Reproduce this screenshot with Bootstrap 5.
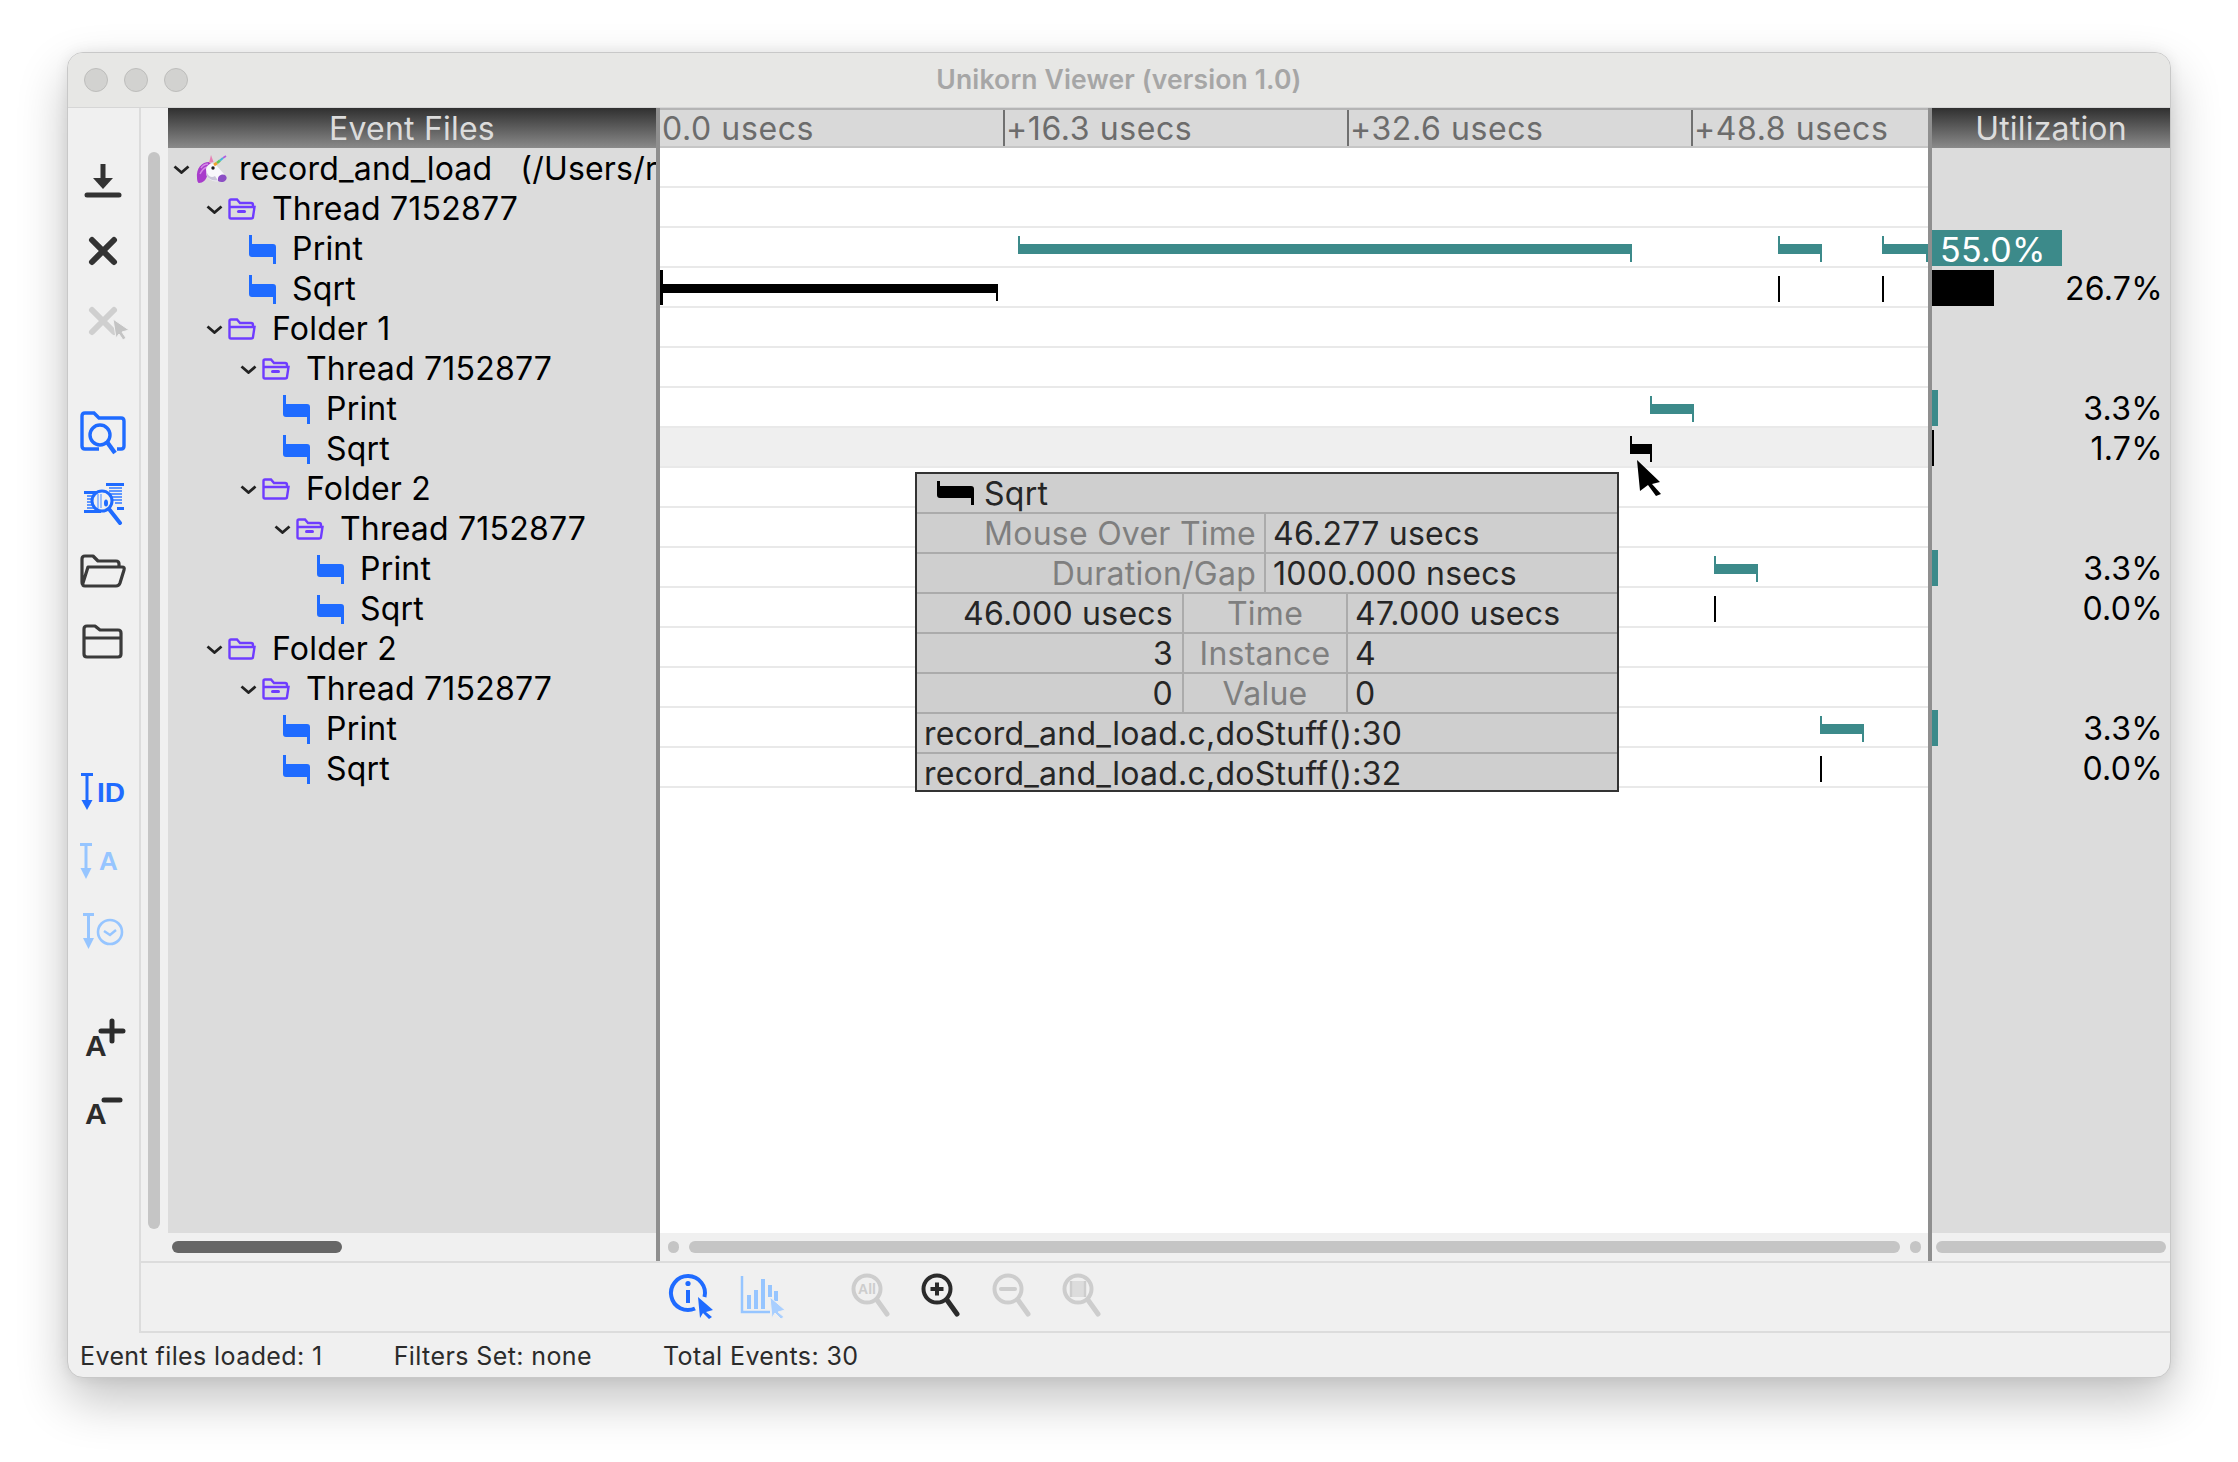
<!DOCTYPE html>
<html lang="en">
<head>
    <meta charset="UTF-8">
    <meta name="viewport" content="width=device-width, initial-scale=1.0">
    <title>Unikorn Viewer (version 1.0)</title>
    <link href="https://cdn.jsdelivr.net/npm/bootstrap@5.3.3/dist/css/bootstrap.min.css" rel="stylesheet">
    <style>
        :root {
            --app-bg: #f0f0f0;
            --panel-grey: #dcdcdc;
            --line: #dcdcdc;
            --lane-line: #e9e9e9;
            --teal: #3c8a8a;
        }
        html, body { height: 100%; }
        body {
            background: #fff;
            font-family: Inter, "Noto Sans", sans-serif;
            padding: 52px 0 0 67px;
        }
        svg { display: block; overflow: visible; }
        .app-window {
            width: 2104px;
            height: 1326px;
            background: var(--app-bg);
            border: 1px solid #c8c8c8;
            border-radius: 16px;
            box-shadow: 0 22px 50px rgba(0, 0, 0, .24), 0 0 14px rgba(0, 0, 0, .08);
            overflow: hidden;
        }
        .title-bar {
            height: 55px;
            background: #e7e7e5;
            border-bottom: 1px solid #d6d6d6;
            padding-left: 16px;
            gap: 16px;
        }
        .light-dot {
            width: 24px;
            height: 24px;
            border-radius: 50%;
            background: #d2d2d0;
            border: 1px solid #bdbdbb;
        }
        .title-text {
            left: 0;
            right: 0;
            text-align: center;
            font-size: 26.5px;
            font-weight: 600;
            color: #a6a6a6;
            letter-spacing: .15px;
        }
        .side-tools {
            width: 73px;
            border-right: 2px solid var(--line);
            padding: 38px 2px 0 0;
        }
        .tool-btn { height: 70px; }
        .tool-gap-a { margin-top: 41px; }
        .tool-gap-b { margin-top: 77px; }
        .tool-gap-c { margin-top: 39px; }
        .tool-gap-d { height: 74px; }

        .scroll-strip { width: 27px; padding: 44px 8px 32px 7px; }
        .scroll-strip > div { width: 12px; height: 100%; background: #c5c5c5; border-radius: 6px; }
        .files-col { width: 488px; }
        .time-col { width: 1272px; border-left: 4px solid #8f8f8f; }
        .util-col { width: 242px; border-left: 4px solid #8f8f8f; }
        .dark-head {
            height: 40px;
            line-height: 42px;
            text-align: center;
            font-size: 32px;
            color: #dcdcdc;
            background: linear-gradient(#303030, #8a8a8a);
            letter-spacing: .2px;
        }
        .ruler {
            height: 40px;
            line-height: 38px;
            background: #d9d9d9;
            border-top: 2px solid #b5b5b5;
            border-bottom: 2px solid #c6c6c6;
            font-size: 32px;
            color: #6c6c6c;
            letter-spacing: .6px;
        }
        .ruler-cell { flex: none; width: 344px; height: 38px; border-left: 2px solid #707070; padding-left: 1px; white-space: nowrap; }
        .ruler-cell:first-child { width: 343px; border-left: 0; padding-left: 2px; }
        .pane-body { flex: 1 1 0; min-height: 0; }
        .files-body { background: var(--panel-grey); overflow: hidden; }
        .tree-row {
            height: 40px;
            padding-top: 2px;
            font-size: 32px;
            color: #000;
            white-space: nowrap;
            letter-spacing: .2px;
        }
        .lvl-0 { padding-left: 5px; }
        .lvl-1 { padding-left: 38px; }
        .lvl-2 { padding-left: 72px; }
        .lvl-3 { padding-left: 106px; }
        .leaf-1 { padding-left: 81px; }
        .leaf-2 { padding-left: 115px; }
        .leaf-3 { padding-left: 149px; }
        .chev-slot { width: 22px; flex: none; }
        .icon-slot { width: 44px; flex: none; }
        .leaf-slot { width: 43px; flex: none; }
        .path-note { margin-left: 28px; }
        .lane {
            height: 40px;
            border-bottom: 2px solid var(--lane-line);
            background: #fff;
        }
        .lane-hot { background: #efefef; }
        .ev-bar { position: absolute; top: 16px; height: 10px; }
        .ev-bar::before, .ev-bar::after { content: ""; position: absolute; width: 2px; height: 18px; background: inherit; }
        .ev-bar::before { left: 0; top: -8px; }
        .ev-bar::after { right: 0; top: 0; }
        .ev-teal { background: var(--teal); }
        .ev-black { background: #000; }
        .ev-tick { position: absolute; top: 8px; width: 2px; height: 26px; background: #000; }
        .hsb-strip { height: 28px; background: var(--app-bg); padding-top: 8px; }
        .hsb-thumb { height: 12px; border-radius: 6px; background: #c5c5c5; }
        .hsb-dark { background: #666; width: 170px; margin-left: 4px; }
        .hsb-dot { width: 11px; }
        .hsb-gap { gap: 10px; }
        .util-row { height: 40px; font-size: 32px; color: #000; text-align: right; padding-right: 7px; line-height: 42px; letter-spacing: .3px; }
        .util-fill { position: absolute; left: 0; top: 2px; height: 36px; }
        .util-row span { position: relative; }
        .util-on-bar { text-align: left; padding-left: 8px; color: #fff; font-size: 34px; line-height: 43px; }
        .tip-box {
            position: absolute;
            left: 255px;
            top: 324px;
            width: 704px;
            height: 320px;
            background: #cfcfcf;
            border: 2px solid #333;
            font-size: 32px;
            line-height: 39px;
            color: #262626;
            letter-spacing: .25px;
            white-space: nowrap;
        }
        .tip-line { height: 40px; border-bottom: 2px solid #ababab; }
        .tip-line:last-child { border-bottom: 0; height: 36px; }
        .tip-key { color: #7f7f7f; }
        .tip-cell { border-right: 2px solid #ababab; }
        .tip-w1 { width: 349px; padding-right: 8px; text-align: right; }
        .tip-w2 { width: 267px; padding-right: 9px; text-align: right; }
        .tip-w3 { width: 164px; text-align: center; }
        .tip-val { padding-left: 7px; }
        .tip-src { padding-left: 7px; }
        .tip-head { padding-left: 20px; gap: 10px; }
        .cursor-mark { position: absolute; left: 977px; top: 312px; }
        .bottom-tools {
            height: 72px;
            border-top: 2px solid var(--line);
            border-bottom: 2px solid var(--line);
            padding: 10px 0 0 526px;
        }
        .bottom-gap { width: 57px; flex: none; }
        .zoom-set { gap: 22.3px; }
        .status-bar { height: 44px; padding: 3px 0 0 12px; gap: 71px; font-size: 25px; color: #2b2b2b; letter-spacing: .4px; }
    </style>
</head>
<body>

<!-- shared icons -->
<svg width="0" height="0" class="position-absolute">
    <symbol id="chev" viewBox="0 0 17 9"><path d="M1.5 1.5 8.5 7.5 15.5 1.5" fill="none" stroke="#222" stroke-width="2.8"/></symbol>
    <symbol id="flag" viewBox="0 0 27 29"><path d="M0 0h3v9h21q3 0 3 3v17h-3v-7H3q-3 0-3-3z"/></symbol>
    <symbol id="folder" viewBox="0 0 28 22">
        <path d="M3 20.5Q1.5 20.5 1.5 19V3Q1.5 1.5 3 1.5H9L12 5H23Q25 5 25 7V8M1.5 9H26.5L25 19Q25 20.5 23 20.5H3" fill="none" stroke="#6f3cff" stroke-width="2.4"/>
    </symbol>
    <symbol id="folderThread" viewBox="0 0 28 22">
        <path d="M3 20.5Q1.5 20.5 1.5 19V3Q1.5 1.5 3 1.5H9L12 5H23Q25 5 25 7V8M1.5 9H26.5L25 19Q25 20.5 23 20.5H3" fill="none" stroke="#6f3cff" stroke-width="2.4"/>
        <rect x="9" y="12" width="9" height="3" rx="1.5" fill="#6f3cff"/>
    </symbol>
    <symbol id="glass" viewBox="0 0 48 48">
        <circle cx="23" cy="16" r="13.5" fill="none" stroke="currentColor" stroke-width="4"/>
        <path d="M33 27 43 41" stroke="currentColor" stroke-width="5" stroke-linecap="round"/>
    </symbol>
</svg>

<div class="app-window d-flex flex-column">
    <div class="title-bar d-flex align-items-center position-relative">
        <div class="light-dot"></div>
        <div class="light-dot"></div>
        <div class="light-dot"></div>
        <div class="title-text position-absolute">Unikorn Viewer (version 1.0)</div>
    </div>

    <div class="d-flex flex-grow-1" style="min-height:0">
        <!-- left tools -->
        <div class="side-tools flex-shrink-0">
            <div class="tool-btn d-flex justify-content-center align-items-center">
                <svg width="48" height="48" viewBox="0 0 48 48"><path d="M24 7V23" stroke="#333" stroke-width="5"/><path d="M14 21H34L24 32Z" fill="#333"/><path d="M8 38H40" stroke="#333" stroke-width="5" stroke-linecap="round"/></svg>
            </div>
            <div class="tool-btn d-flex justify-content-center align-items-center">
                <svg width="48" height="48" viewBox="0 0 48 48"><path d="M13 13 35 35M35 13 13 35" stroke="#333" stroke-width="6" stroke-linecap="round"/></svg>
            </div>
            <div class="tool-btn d-flex justify-content-center align-items-center">
                <svg width="48" height="48" viewBox="0 0 48 48"><path d="M13 13 35 35M35 13 13 35" stroke="#cfcfcf" stroke-width="6" stroke-linecap="round"/><path d="M34 22 50 33 43 35 47 41 44 43 40 37 37 41Z" fill="#c4c4c4" stroke="#f0f0f0"/></svg>
            </div>
            <div class="tool-btn tool-gap-a d-flex justify-content-center align-items-center">
                <svg width="48" height="48" viewBox="0 0 48 48"><path d="M20 41H6Q3 41 3 38V8Q3 5 6 5H15L20 10H42Q45 10 45 13V38Q45 41 42 41H38" fill="none" stroke="#1f6bff" stroke-width="3.4"/><circle cx="21" cy="27" r="10" fill="none" stroke="#1f6bff" stroke-width="3.4"/><path d="M28 34 36 45" stroke="#1f6bff" stroke-width="4.4"/></svg>
            </div>
            <div class="tool-btn d-flex justify-content-center align-items-center">
                <svg width="48" height="48" viewBox="0 0 48 48" fill="#1f6bff">
                    <path d="M8 18H18M8 21H18M8 24H18M8 27H18M8 30H18M30 10H43M30 13H43M30 16H43M32 19H43M34 22H43M36 25H43" stroke="#5f97ff" stroke-width="1.800"/>
                    <path d="M5 13H19V16H5ZM5 32H22V35H5ZM27 5H45V8H27ZM38 29H45V32H38Z"/>
                    <circle cx="23" cy="23" r="10" fill="#f0f0f0" stroke="#1f6bff" stroke-width="3"/>
                    <path d="M19 16V30M22 16V30" stroke="#8db6ff" stroke-width="1.800"/>
                    <ellipse cx="27" cy="25" rx="2" ry="3.500"/>
                    <path d="M30 31 41 45" stroke="#1f6bff" stroke-width="4" stroke-linecap="round"/>
                </svg>
            </div>
            <div class="tool-btn d-flex justify-content-center align-items-center">
                <svg width="48" height="48" viewBox="0 0 48 48"><path d="M5 37Q3 37 3 34V11Q3 8 6 8H14L19 13H37Q40 13 40 16V19M9 19H43Q46 19 45 22L41 35Q40 38 37 38H6Q3 38 4 35Z" fill="none" stroke="#3a3a3a" stroke-width="3.2" stroke-linejoin="round"/></svg>
            </div>
            <div class="tool-btn d-flex justify-content-center align-items-center">
                <svg width="48" height="48" viewBox="0 0 48 48"><path d="M8 8H16L21 12H39Q42 12 42 15V36Q42 39 39 39H8Q5 39 5 36V11Q5 8 8 8ZM5 20H42" fill="none" stroke="#3a3a3a" stroke-width="3.2" stroke-linejoin="round"/></svg>
            </div>
            <div class="tool-btn tool-gap-b d-flex justify-content-center align-items-center">
                <svg width="48" height="48" viewBox="0 0 48 48"><path d="M2 9.500H14M8 9V36" stroke="#1f6bff" stroke-width="3"/><path d="M2.500 35H13.500L8 45Z" fill="#1f6bff"/><text x="18" y="37" font-family="Liberation Sans, sans-serif" font-weight="700" font-size="28" fill="#1f6bff">ID</text></svg>
            </div>
            <div class="tool-btn d-flex justify-content-center align-items-center">
                <svg width="48" height="48" viewBox="0 0 48 48"><path d="M1 9.500H13M7 9V34" stroke="#96c5ff" stroke-width="3"/><path d="M1.500 33H12.500L7 44Z" fill="#96c5ff"/><text x="20" y="35" font-family="Liberation Sans, sans-serif" font-weight="700" font-size="26" fill="#96c5ff">A</text></svg>
            </div>
            <div class="tool-btn d-flex justify-content-center align-items-center">
                <svg width="48" height="48" viewBox="0 0 48 48"><path d="M4 9.500H15M9.500 9V34" stroke="#96c5ff" stroke-width="3"/><path d="M4 33H15L9.500 44Z" fill="#96c5ff"/><circle cx="31" cy="27" r="12" fill="none" stroke="#96c5ff" stroke-width="2.6"/><path d="M25 26 31 30 37 25" fill="none" stroke="#96c5ff" stroke-width="2.4"/></svg>
            </div>
            <div class="tool-btn tool-gap-c d-flex justify-content-center align-items-center">
                <svg width="48" height="48" viewBox="0 0 48 48"><text x="6" y="42" font-family="Liberation Sans, sans-serif" font-weight="700" font-size="30" fill="#2c2c2c">A</text><path d="M33 7V27M22 17H44" stroke="#2c2c2c" stroke-width="5" stroke-linecap="round"/></svg>
            </div>
            <div class="tool-btn tool-gap-d d-flex justify-content-center align-items-center">
                <svg width="48" height="48" viewBox="0 0 48 48"><text x="6" y="38" font-family="Liberation Sans, sans-serif" font-weight="700" font-size="30" fill="#2c2c2c">A</text><path d="M25 14H41" stroke="#2c2c2c" stroke-width="5" stroke-linecap="round"/></svg>
            </div>
        </div>

        <div class="flex-grow-1 d-flex flex-column" style="min-width:0">
            <div class="d-flex flex-grow-1" style="min-height:0">
                <div class="scroll-strip flex-shrink-0"><div></div></div>

                <!-- event files -->
                <div class="files-col d-flex flex-column flex-shrink-0">
                    <div class="dark-head">Event Files</div>
                    <div class="pane-body files-body">
                        <div class="tree-row lvl-0 d-flex align-items-center">
                            <span class="chev-slot"><svg width="17" height="9"><use href="#chev"/></svg></span>
                            <span class="icon-slot">
                                <svg width="32" height="30" viewBox="0 0 32 30">
                                    <path d="M14 8C7 8 1 14 2 24 2 27 3 29 4 29 8 29 11 26 12 22L18 12Z" fill="#a83ccb"/>
                                    <path d="M6 14C8 11 11 10 13 10M5 20C7 16 9 14 12 13" stroke="#d58ae6" stroke-width="1.400" fill="none"/>
                                    <path d="M11 15C12 10 18 8 21 11L29 20 24 27C19 28 13 26 11.500 21Z" fill="#f8f8fc"/>
                                    <path d="M11.500 21C13 25 18 27 23 26.500L20 22C17 24 14 23 12 19Z" fill="#c9c6d8"/>
                                    <path d="M23 24C24 20 30 19 31.500 23 32.500 27 27 29.500 23 27Z" fill="#8c4fc4"/>
                                    <path d="M14 9 16 1 18.500 8Z" fill="#e77fb4"/>
                                    <path d="M19 11 22 9" stroke="#f2a22e" stroke-width="3"/>
                                    <path d="M22 9 25 6.500" stroke="#62c65a" stroke-width="2.600"/>
                                    <path d="M25 6.500 28 4" stroke="#45b8d8" stroke-width="2.200"/>
                                    <path d="M28 4 31 2" stroke="#b05fe0" stroke-width="1.800"/>
                                    <circle cx="18" cy="14" r="1.700" fill="#1c1c1c"/>
                                </svg>
                            </span>
                            <span>record_and_load</span><span class="path-note">(/Users/r</span>
                        </div>
                        <div class="tree-row lvl-1 d-flex align-items-center">
                            <span class="chev-slot"><svg width="17" height="9"><use href="#chev"/></svg></span>
                            <span class="icon-slot"><svg width="28" height="22"><use href="#folderThread"/></svg></span>
                            <span>Thread 7152877</span>
                        </div>
                        <div class="tree-row leaf-1 d-flex align-items-center">
                            <span class="leaf-slot"><svg width="27" height="29" fill="#1f6bff"><use href="#flag"/></svg></span><span>Print</span>
                        </div>
                        <div class="tree-row leaf-1 d-flex align-items-center">
                            <span class="leaf-slot"><svg width="27" height="29" fill="#1f6bff"><use href="#flag"/></svg></span><span>Sqrt</span>
                        </div>
                        <div class="tree-row lvl-1 d-flex align-items-center">
                            <span class="chev-slot"><svg width="17" height="9"><use href="#chev"/></svg></span>
                            <span class="icon-slot"><svg width="28" height="22"><use href="#folder"/></svg></span>
                            <span>Folder 1</span>
                        </div>
                        <div class="tree-row lvl-2 d-flex align-items-center">
                            <span class="chev-slot"><svg width="17" height="9"><use href="#chev"/></svg></span>
                            <span class="icon-slot"><svg width="28" height="22"><use href="#folderThread"/></svg></span>
                            <span>Thread 7152877</span>
                        </div>
                        <div class="tree-row leaf-2 d-flex align-items-center">
                            <span class="leaf-slot"><svg width="27" height="29" fill="#1f6bff"><use href="#flag"/></svg></span><span>Print</span>
                        </div>
                        <div class="tree-row leaf-2 d-flex align-items-center">
                            <span class="leaf-slot"><svg width="27" height="29" fill="#1f6bff"><use href="#flag"/></svg></span><span>Sqrt</span>
                        </div>
                        <div class="tree-row lvl-2 d-flex align-items-center">
                            <span class="chev-slot"><svg width="17" height="9"><use href="#chev"/></svg></span>
                            <span class="icon-slot"><svg width="28" height="22"><use href="#folder"/></svg></span>
                            <span>Folder 2</span>
                        </div>
                        <div class="tree-row lvl-3 d-flex align-items-center">
                            <span class="chev-slot"><svg width="17" height="9"><use href="#chev"/></svg></span>
                            <span class="icon-slot"><svg width="28" height="22"><use href="#folderThread"/></svg></span>
                            <span>Thread 7152877</span>
                        </div>
                        <div class="tree-row leaf-3 d-flex align-items-center">
                            <span class="leaf-slot"><svg width="27" height="29" fill="#1f6bff"><use href="#flag"/></svg></span><span>Print</span>
                        </div>
                        <div class="tree-row leaf-3 d-flex align-items-center">
                            <span class="leaf-slot"><svg width="27" height="29" fill="#1f6bff"><use href="#flag"/></svg></span><span>Sqrt</span>
                        </div>
                        <div class="tree-row lvl-1 d-flex align-items-center">
                            <span class="chev-slot"><svg width="17" height="9"><use href="#chev"/></svg></span>
                            <span class="icon-slot"><svg width="28" height="22"><use href="#folder"/></svg></span>
                            <span>Folder 2</span>
                        </div>
                        <div class="tree-row lvl-2 d-flex align-items-center">
                            <span class="chev-slot"><svg width="17" height="9"><use href="#chev"/></svg></span>
                            <span class="icon-slot"><svg width="28" height="22"><use href="#folderThread"/></svg></span>
                            <span>Thread 7152877</span>
                        </div>
                        <div class="tree-row leaf-2 d-flex align-items-center">
                            <span class="leaf-slot"><svg width="27" height="29" fill="#1f6bff"><use href="#flag"/></svg></span><span>Print</span>
                        </div>
                        <div class="tree-row leaf-2 d-flex align-items-center">
                            <span class="leaf-slot"><svg width="27" height="29" fill="#1f6bff"><use href="#flag"/></svg></span><span>Sqrt</span>
                        </div>
                    </div>
                    <div class="hsb-strip"><div class="hsb-thumb hsb-dark"></div></div>
                </div>

                <!-- timeline -->
                <div class="time-col d-flex flex-column flex-shrink-0">
                    <div class="ruler d-flex overflow-hidden">
                        <div class="ruler-cell">0.0 usecs</div>
                        <div class="ruler-cell">+16.3 usecs</div>
                        <div class="ruler-cell">+32.6 usecs</div>
                        <div class="ruler-cell">+48.8 usecs</div>
                    </div>
                    <div class="pane-body bg-white position-relative">
                        <div class="lane"></div>
                        <div class="lane"></div>
                        <div class="lane position-relative">
                            <div class="ev-bar ev-teal" style="left:358px;width:614px"></div>
                            <div class="ev-bar ev-teal" style="left:1118px;width:44px"></div>
                            <div class="ev-bar ev-teal" style="left:1222px;width:46px"></div>
                        </div>
                        <div class="lane position-relative">
                            <div class="ev-tick" style="left:0;top:2px;height:35px;width:3px"></div>
                            <div class="ev-tick" style="left:1px;top:16px;height:9px;width:336px"></div>
                            <div class="ev-tick" style="left:336px;top:16px;height:17px;width:2px"></div>
                            <div class="ev-tick" style="left:1118px"></div>
                            <div class="ev-tick" style="left:1222px"></div>
                        </div>
                        <div class="lane"></div>
                        <div class="lane"></div>
                        <div class="lane position-relative">
                            <div class="ev-bar ev-teal" style="left:990px;width:44px"></div>
                        </div>
                        <div class="lane lane-hot position-relative">
                            <div class="ev-bar ev-black" style="left:970px;width:22px"></div>
                        </div>
                        <div class="lane"></div>
                        <div class="lane"></div>
                        <div class="lane position-relative">
                            <div class="ev-bar ev-teal" style="left:1054px;width:44px"></div>
                        </div>
                        <div class="lane position-relative">
                            <div class="ev-tick" style="left:1054px"></div>
                        </div>
                        <div class="lane"></div>
                        <div class="lane"></div>
                        <div class="lane position-relative">
                            <div class="ev-bar ev-teal" style="left:1160px;width:44px"></div>
                        </div>
                        <div class="lane position-relative">
                            <div class="ev-tick" style="left:1160px"></div>
                        </div>

                        <!-- hover popup -->
                        <div class="tip-box">
                            <div class="tip-line tip-head d-flex align-items-center">
                                <svg width="37" height="24" viewBox="0 0 37 24" class="flex-shrink-0" fill="#000"><path d="M0 0h3v5h31q3 0 3 3v16h-3v-7H3q-3 0-3-3z"/></svg>
                                <span>Sqrt</span>
                            </div>
                            <div class="tip-line d-flex">
                                <div class="tip-cell tip-w1 tip-key flex-shrink-0">Mouse Over Time</div>
                                <div class="tip-val">46.277 usecs</div>
                            </div>
                            <div class="tip-line d-flex">
                                <div class="tip-cell tip-w1 tip-key flex-shrink-0">Duration/Gap</div>
                                <div class="tip-val">1000.000 nsecs</div>
                            </div>
                            <div class="tip-line d-flex">
                                <div class="tip-cell tip-w2 flex-shrink-0">46.000 usecs</div>
                                <div class="tip-cell tip-w3 tip-key flex-shrink-0">Time</div>
                                <div class="tip-val">47.000 usecs</div>
                            </div>
                            <div class="tip-line d-flex">
                                <div class="tip-cell tip-w2 flex-shrink-0">3</div>
                                <div class="tip-cell tip-w3 tip-key flex-shrink-0">Instance</div>
                                <div class="tip-val">4</div>
                            </div>
                            <div class="tip-line d-flex">
                                <div class="tip-cell tip-w2 flex-shrink-0">0</div>
                                <div class="tip-cell tip-w3 tip-key flex-shrink-0">Value</div>
                                <div class="tip-val">0</div>
                            </div>
                            <div class="tip-line tip-src">record_and_load.c,doStuff():30</div>
                            <div class="tip-line tip-src">record_and_load.c,doStuff():32</div>
                        </div>
                        <svg class="cursor-mark" width="26" height="36" viewBox="0 0 26 36"><path d="M0 0 23 22 15 24 24 34 19 36 11 25 3 31Z" fill="#000"/></svg>
                    </div>
                    <div class="hsb-strip d-flex hsb-gap ps-2">
                        <div class="hsb-thumb hsb-dot"></div>
                        <div class="hsb-thumb" style="width:1211px"></div>
                        <div class="hsb-thumb hsb-dot"></div>
                    </div>
                </div>

                <!-- utilization -->
                <div class="util-col d-flex flex-column flex-grow-1">
                    <div class="dark-head">Utilization</div>
                    <div class="pane-body files-body">
                        <div class="util-row"></div>
                        <div class="util-row"></div>
                        <div class="util-row util-on-bar position-relative"><div class="util-fill ev-teal" style="width:130px"></div><span>55.0%</span></div>
                        <div class="util-row position-relative"><div class="util-fill ev-black" style="width:62px"></div><span>26.7%</span></div>
                        <div class="util-row"></div>
                        <div class="util-row"></div>
                        <div class="util-row position-relative"><div class="util-fill ev-teal" style="width:6px"></div><span>3.3%</span></div>
                        <div class="util-row position-relative"><div class="util-fill ev-black" style="width:2px"></div><span>1.7%</span></div>
                        <div class="util-row"></div>
                        <div class="util-row"></div>
                        <div class="util-row position-relative"><div class="util-fill ev-teal" style="width:6px"></div><span>3.3%</span></div>
                        <div class="util-row"><span>0.0%</span></div>
                        <div class="util-row"></div>
                        <div class="util-row"></div>
                        <div class="util-row position-relative"><div class="util-fill ev-teal" style="width:6px"></div><span>3.3%</span></div>
                        <div class="util-row"><span>0.0%</span></div>
                    </div>
                    <div class="hsb-strip px-1"><div class="hsb-thumb"></div></div>
                </div>
            </div>

            <!-- bottom tools -->
            <div class="bottom-tools d-flex flex-shrink-0">
                <svg width="48" height="48" viewBox="0 0 48 48" class="flex-shrink-0">
                    <path d="M37.500 24A17 17 0 1 0 28 35.500" fill="none" stroke="#1f6bff" stroke-width="4"/>
                    <circle cx="21" cy="10.500" r="2.600" fill="#1f6bff"/><path d="M21 17V30" stroke="#1f6bff" stroke-width="4"/>
                    <path d="M31 24 46 37 39 39 45 44 42 46 36 40 33 45Z" fill="#1f6bff"/>
                </svg>
                <svg width="48" height="48" viewBox="0 0 48 48" class="flex-shrink-0 ms-4">
                    <path d="M3 3V39H31" fill="none" stroke="#96c5ff" stroke-width="2.500"/>
                    <path d="M8 22H12V36H8ZM15 17H19V36H15ZM22 6H26V36H22ZM29 12H33V24H29ZM35 18H39V28H35Z" fill="#96c5ff"/>
                    <path d="M31 24 46 37 39 39 45 44 42 46 36 40 33 45Z" fill="#a9cfff" stroke="#f0f0f0"/>
                </svg>
                <div class="bottom-gap"></div>
                <div class="d-flex zoom-set">
                    <svg width="48" height="48" style="color:#cdcdcd"><use href="#glass"/><text x="23" y="21" text-anchor="middle" font-family="Liberation Sans, sans-serif" font-weight="700" font-size="14" fill="#cdcdcd">All</text></svg>
                    <svg width="48" height="48" style="color:#2b2b2b"><use href="#glass"/><path d="M23 9.500V22.500M16.500 16H29.500" stroke="#2b2b2b" stroke-width="4"/></svg>
                    <svg width="48" height="48" style="color:#cdcdcd"><use href="#glass"/><path d="M16 16H30" stroke="#cdcdcd" stroke-width="4" stroke-linecap="round"/></svg>
                    <svg width="48" height="48" style="color:#cdcdcd"><use href="#glass"/><path d="M15 8H31V24H15Z" fill="#dcdcdc"/><path d="M16 8V24M30 8V24" stroke="#cdcdcd" stroke-width="2.500"/></svg>
                </div>
            </div>
        </div>
    </div>

    <div class="status-bar d-flex align-items-center flex-shrink-0">
        <span>Event files loaded: 1</span>
        <span>Filters Set: none</span>
        <span>Total Events: 30</span>
    </div>
</div>

<script src="https://cdn.jsdelivr.net/npm/bootstrap@5.3.3/dist/js/bootstrap.bundle.min.js"></script>
</body>
</html>
